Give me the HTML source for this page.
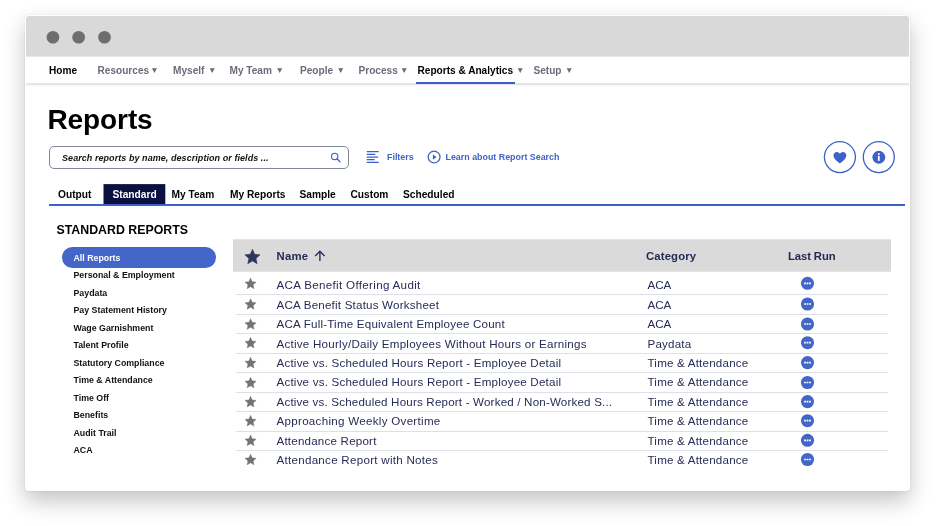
<!DOCTYPE html>
<html lang="en">
<head>
<meta charset="utf-8">
<title>Reports</title>
<style>
*{box-sizing:border-box;margin:0;padding:0}
html,body{width:936px;height:526px;background:#fff;overflow:hidden}
body{font-family:"Liberation Sans",sans-serif;position:relative;color:#000}
.abs{position:absolute;white-space:nowrap;line-height:1}
#win{position:absolute;left:25px;top:15px;width:885px;height:476px;background:#fff;border-radius:4px;
 box-shadow:0 10px 22px rgba(0,0,0,.235),0 0 2px rgba(0,0,0,.1)}
#c{position:absolute;left:0;top:0;width:936px;height:526px;will-change:transform}
#titlebar{position:absolute;left:1px;top:1px;width:883px;height:41px;border-radius:3px 3px 0 0;background:linear-gradient(#d9d9d9 40px,#e7e7e7 40px)}
#navshadow{position:absolute;left:26px;top:83px;width:883px;height:4px;background:linear-gradient(#e4e4e7 0,#e6e6e9 2px,#f6f6f7 2px,#fff 4px)}
.nav{font-weight:bold;font-size:10.1px;color:#6a6d78}
.nav.on{color:#000}
.nav i{font-style:normal;font-size:8.5px;margin-left:3.5px;position:relative;top:-.3px}
#navline{position:absolute;left:416px;top:82px;width:99px;height:2px;background:#385dc6}
#title{font-weight:bold;font-size:28px;left:47.5px;top:106px;letter-spacing:-.1px}
#search{position:absolute;left:49px;top:146px;width:300px;height:23px;border:1px solid #838695;border-radius:5px;background:#fff}
#search span{font-weight:bold;font-style:italic;font-size:9px;left:12px;top:6.5px;color:#111;letter-spacing:.06px}
.blue{color:#3f63c8;font-weight:bold;font-size:8.9px}
.tab{font-weight:bold;font-size:10.2px;top:190px}
#tabline{position:absolute;left:48.5px;top:204px;width:856.5px;height:2px;background:#3c62c8}
#sechead{font-weight:bold;font-size:12.35px;left:56.5px;top:224px}
#pill{position:absolute;left:62px;top:247px;width:154px;height:21px;border-radius:11px;background:#4466c8}
.side{font-weight:bold;font-size:8.8px;left:73.5px;color:#111}
#thead{position:absolute;left:233px;top:239px;width:658px;height:33px;background:linear-gradient(#e5e5e5 1px,#dadada 1px 32px,#e4e4e4 32px)}
.th{font-weight:bold;font-size:11.3px;color:#252a55}
.row{position:absolute;left:236px;width:652px;height:19.5px;border-bottom:1px solid #dddfe9}
.row span{position:absolute;white-space:nowrap;line-height:1;font-size:11.6px;letter-spacing:.2px;color:#272c57;top:3.5px}
.row .n{left:40.5px}.row .c{left:411.5px}
#icons,#bg{position:absolute;left:0;top:0;pointer-events:none}
</style>
</head>
<body>
<div id="win">
 <div id="titlebar"></div>
</div>
<div id="c">
<svg id="bg" width="936" height="526" viewBox="0 0 936 526"><circle cx="52.95" cy="37.25" r="6.35" fill="#6e6e6e"/><circle cx="78.65" cy="37.25" r="6.35" fill="#6e6e6e"/><circle cx="104.5" cy="37.25" r="6.35" fill="#6e6e6e"/><rect x="103.5" y="184.1" width="61.8" height="20.9" fill="#0a1140"/></svg>
 <div id="navshadow"></div>
 <div class="abs nav on" style="left:49px;top:65.5px">Home</div>
 <div class="abs nav" style="left:97.5px;top:65.5px">Resources<i style="margin-left:1.2px">▼</i></div>
 <div class="abs nav" style="left:173px;top:65.5px">Myself<i>▼</i></div>
 <div class="abs nav" style="left:229.5px;top:65.5px">My Team<i>▼</i></div>
 <div class="abs nav" style="left:300px;top:65.5px">People<i>▼</i></div>
 <div class="abs nav" style="left:358.5px;top:65.5px">Process<i style="margin-left:2.3px">▼</i></div>
 <div class="abs nav on" style="left:417.5px;top:65.5px">Reports &amp; Analytics<i style="color:#6a6d78;margin-left:3px">▼</i></div>
 <div class="abs nav" style="left:533.5px;top:65.5px">Setup<i>▼</i></div>
 <div id="navline"></div>

 <div id="title" class="abs">Reports</div>

 <div id="search"><span class="abs">Search reports by name, description or fields ...</span>
 </div>
 <div class="abs blue" style="left:387px;top:153px">Filters</div>
 <div class="abs blue" style="left:445.5px;top:153px">Learn about Report Search</div>

 <div class="abs tab" style="left:58px">Output</div>
 <div class="abs tab" style="left:112.5px;color:#fff">Standard</div>
 <div class="abs tab" style="left:171.5px">My Team</div>
 <div class="abs tab" style="left:230px">My Reports</div>
 <div class="abs tab" style="left:299.5px">Sample</div>
 <div class="abs tab" style="left:350.5px">Custom</div>
 <div class="abs tab" style="left:403px">Scheduled</div>
 <div id="tabline"></div>

 <div id="sechead" class="abs">STANDARD REPORTS</div>
 <div id="pill"></div>
 <div class="abs side" style="top:253.5px;color:#fff">All Reports</div>
 <div class="abs side" style="top:271px">Personal &amp; Employment</div>
 <div class="abs side" style="top:288.5px">Paydata</div>
 <div class="abs side" style="top:306px">Pay Statement History</div>
 <div class="abs side" style="top:323.5px">Wage Garnishment</div>
 <div class="abs side" style="top:341px">Talent Profile</div>
 <div class="abs side" style="top:358.5px">Statutory Compliance</div>
 <div class="abs side" style="top:376px">Time &amp; Attendance</div>
 <div class="abs side" style="top:393.5px">Time Off</div>
 <div class="abs side" style="top:411px">Benefits</div>
 <div class="abs side" style="top:428.5px">Audit Trail</div>
 <div class="abs side" style="top:446px">ACA</div>

 <div id="thead"></div>
 <div class="abs th" style="left:276.5px;top:251px;letter-spacing:.25px">Name</div>
 <div class="abs th" style="left:646px;top:251px;letter-spacing:.15px">Category</div>
 <div class="abs th" style="left:788px;top:251px;letter-spacing:-.1px">Last Run</div>
 <div id="rows">
 <div class="row" style="top:275.8px"><span class="n" style="letter-spacing:0.32px">ACA Benefit Offering Audit</span><span class="c" style="letter-spacing:-.1px">ACA</span></div>
 <div class="row" style="top:295.3px"><span class="n" style="top:3.42px">ACA Benefit Status Worksheet</span><span class="c" style="top:3.42px;letter-spacing:-.1px">ACA</span></div>
 <div class="row" style="top:314.8px"><span class="n" style="top:3.35px">ACA Full-Time Equivalent Employee Count</span><span class="c" style="top:3.35px;letter-spacing:-.1px">ACA</span></div>
 <div class="row" style="top:334.3px"><span class="n" style="top:3.27px;letter-spacing:0.24px">Active Hourly/Daily Employees Without Hours or Earnings</span><span class="c" style="top:3.27px">Paydata</span></div>
 <div class="row" style="top:353.8px"><span class="n" style="top:3.20px">Active vs. Scheduled Hours Report - Employee Detail</span><span class="c" style="top:3.20px">Time &amp; Attendance</span></div>
 <div class="row" style="top:373.3px"><span class="n" style="top:3.12px">Active vs. Scheduled Hours Report - Employee Detail</span><span class="c" style="top:3.12px">Time &amp; Attendance</span></div>
 <div class="row" style="top:392.8px"><span class="n" style="top:3.05px;letter-spacing:0.18px">Active vs. Scheduled Hours Report - Worked / Non-Worked S...</span><span class="c" style="top:3.05px">Time &amp; Attendance</span></div>
 <div class="row" style="top:412.3px"><span class="n" style="top:2.98px;letter-spacing:0.285px">Approaching Weekly Overtime</span><span class="c" style="top:2.98px">Time &amp; Attendance</span></div>
 <div class="row" style="top:431.8px"><span class="n" style="top:2.90px">Attendance Report</span><span class="c" style="top:2.90px">Time &amp; Attendance</span></div>
 <div class="row" style="top:451.3px;border-bottom-color:transparent"><span class="n" style="top:2.83px;letter-spacing:0.27px">Attendance Report with Notes</span><span class="c" style="top:2.83px">Time &amp; Attendance</span></div>
 </div>
<svg id="icons" width="936" height="526" viewBox="0 0 936 526">
<circle cx="334.7" cy="156.4" r="3.2" fill="none" stroke="#3d61c8" stroke-width="1.1"/><path d="M337 158.8L340 161.7" stroke="#3d61c8" stroke-width="1.3" stroke-linecap="round"/>
<path d="M366.7 151.7h12.1M366.7 154.35h8.6M366.7 157h11.5M366.7 159.65h8M366.7 162.3h12.1" stroke="#3d61c8" stroke-width="1.25"/>
<circle cx="434.1" cy="157" r="5.9" fill="none" stroke="#3d61c8" stroke-width="1.25"/><path d="M432.9 154.4L436.5 157.1L432.9 159.8Z" fill="#3d61c8"/>
<circle cx="839.9" cy="157.1" r="15.5" fill="#fff" stroke="#3d61c8" stroke-width="1.3"/>
<path transform="translate(822.9 140.3)" d="M17 23.2C11.5 19 10.6 17 10.6 14.9c0-1.9 1.5-3.3 3.3-3.3 1.3 0 2.4.7 3.1 1.8.7-1.1 1.8-1.8 3.1-1.8 1.8 0 3.3 1.4 3.3 3.3 0 2.1-.9 4.1-6.4 8.3Z" fill="#3d61c8"/>
<circle cx="878.8" cy="157.1" r="15.5" fill="#fff" stroke="#3d61c8" stroke-width="1.3"/><circle cx="878.8" cy="157.25" r="6.4" fill="#3d61c8"/><circle cx="878.8" cy="153.95" r="1" fill="#fff"/><rect x="877.9" y="155.85" width="1.8" height="5" fill="#fff"/>
<path d="M252.45 249.25L254.66 254.21L260.06 254.78L256.03 258.41L257.15 263.72L252.45 261.01L247.75 263.72L248.87 258.41L244.84 254.78L250.24 254.21Z" fill="#2f345d" stroke="#2f345d" stroke-width=".5" stroke-linejoin="round"/>
<path d="M319.9 251.2V261.1M315.2 256L319.9 251.2L324.6 256" fill="none" stroke="#2a2f5a" stroke-width="1.4"/>
<path d="M250.55 277.97L252.18 281.63L256.16 282.05L253.19 284.73L254.02 288.64L250.55 286.64L247.08 288.64L247.91 284.73L244.94 282.05L248.92 281.63Z M250.55 298.67L252.18 302.33L256.16 302.75L253.19 305.43L254.02 309.34L250.55 307.34L247.08 309.34L247.91 305.43L244.94 302.75L248.92 302.33Z M250.55 318.67L252.18 322.33L256.16 322.75L253.19 325.43L254.02 329.34L250.55 327.34L247.08 329.34L247.91 325.43L244.94 322.75L248.92 322.33Z M250.55 337.37L252.18 341.03L256.16 341.45L253.19 344.13L254.02 348.04L250.55 346.04L247.08 348.04L247.91 344.13L244.94 341.45L248.92 341.03Z M250.55 357.27L252.18 360.93L256.16 361.35L253.19 364.03L254.02 367.94L250.55 365.94L247.08 367.94L247.91 364.03L244.94 361.35L248.92 360.93Z M250.55 377.17L252.18 380.83L256.16 381.25L253.19 383.93L254.02 387.84L250.55 385.84L247.08 387.84L247.91 383.93L244.94 381.25L248.92 380.83Z M250.55 396.27L252.18 399.93L256.16 400.35L253.19 403.03L254.02 406.94L250.55 404.94L247.08 406.94L247.91 403.03L244.94 400.35L248.92 399.93Z M250.55 415.37L252.18 419.03L256.16 419.45L253.19 422.13L254.02 426.04L250.55 424.04L247.08 426.04L247.91 422.13L244.94 419.45L248.92 419.03Z M250.55 434.97L252.18 438.63L256.16 439.05L253.19 441.73L254.02 445.64L250.55 443.64L247.08 445.64L247.91 441.73L244.94 439.05L248.92 438.63Z M250.55 454.17L252.18 457.83L256.16 458.25L253.19 460.93L254.02 464.84L250.55 462.84L247.08 464.84L247.91 460.93L244.94 458.25L248.92 457.83Z" fill="#737373" stroke="#737373" stroke-width=".4" stroke-linejoin="round"/>
<circle cx="807.5" cy="283.3" r="6.55" fill="#4466c8"/>
<circle cx="807.5" cy="304" r="6.55" fill="#4466c8"/>
<circle cx="807.5" cy="324" r="6.55" fill="#4466c8"/>
<circle cx="807.5" cy="342.7" r="6.55" fill="#4466c8"/>
<circle cx="807.5" cy="362.6" r="6.55" fill="#4466c8"/>
<circle cx="807.5" cy="382.5" r="6.55" fill="#4466c8"/>
<circle cx="807.5" cy="401.6" r="6.55" fill="#4466c8"/>
<circle cx="807.5" cy="420.7" r="6.55" fill="#4466c8"/>
<circle cx="807.5" cy="440.3" r="6.55" fill="#4466c8"/>
<circle cx="807.5" cy="459.5" r="6.55" fill="#4466c8"/>
<path d="M804.1 282.45h1.8v1.7h-1.8zM806.6 282.45h1.8v1.7h-1.8zM809.1 282.45h1.8v1.7h-1.8zM804.1 303.15h1.8v1.7h-1.8zM806.6 303.15h1.8v1.7h-1.8zM809.1 303.15h1.8v1.7h-1.8zM804.1 323.15h1.8v1.7h-1.8zM806.6 323.15h1.8v1.7h-1.8zM809.1 323.15h1.8v1.7h-1.8zM804.1 341.85h1.8v1.7h-1.8zM806.6 341.85h1.8v1.7h-1.8zM809.1 341.85h1.8v1.7h-1.8zM804.1 361.75h1.8v1.7h-1.8zM806.6 361.75h1.8v1.7h-1.8zM809.1 361.75h1.8v1.7h-1.8zM804.1 381.65h1.8v1.7h-1.8zM806.6 381.65h1.8v1.7h-1.8zM809.1 381.65h1.8v1.7h-1.8zM804.1 400.75h1.8v1.7h-1.8zM806.6 400.75h1.8v1.7h-1.8zM809.1 400.75h1.8v1.7h-1.8zM804.1 419.85h1.8v1.7h-1.8zM806.6 419.85h1.8v1.7h-1.8zM809.1 419.85h1.8v1.7h-1.8zM804.1 439.45h1.8v1.7h-1.8zM806.6 439.45h1.8v1.7h-1.8zM809.1 439.45h1.8v1.7h-1.8zM804.1 458.65h1.8v1.7h-1.8zM806.6 458.65h1.8v1.7h-1.8zM809.1 458.65h1.8v1.7h-1.8z" fill="#fff"/>
</svg>
</div>
</body>
</html>
